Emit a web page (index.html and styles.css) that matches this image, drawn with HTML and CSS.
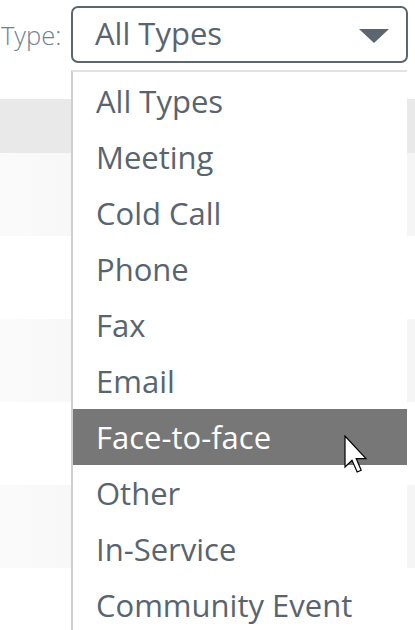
FILE: index.html
```html
<!DOCTYPE html>
<html>
<head>
    <link rel="stylesheet" href="styles.css">
</head>
<body>
    <div class="filter">
        <span class="label">Type:</span>
        <div class="select">
            <span class="value">All Types</span>
            <span class="caret"></span>
        </div>
    </div>

    <!-- table rows behind the open list -->
    <div class="table">
        <div class="row head"></div>
        <div class="row odd"></div>
        <div class="row"></div>
        <div class="row odd"></div>
        <div class="row"></div>
        <div class="row odd"></div>
        <div class="row"></div>
    </div>

    <ul class="options">
        <li>All Types</li>
        <li>Meeting</li>
        <li>Cold Call</li>
        <li>Phone</li>
        <li>Fax</li>
        <li>Email</li>
        <li class="hover">Face-to-face</li>
        <li>Other</li>
        <li>In-Service</li>
        <li>Community Event</li>
    </ul>

    <svg class="cursor" width="24" height="38" viewBox="0 0 12 19">
        <path d="M0.5 0.5 L0.5 16 L4 12.6 L6.6 18.5 L8.6 17.6 L6.1 11.8 L11 11.8 Z" fill="#fff" stroke="#000" stroke-width="0.6" stroke-linejoin="miter"/>
    </svg>
</body>
</html>
```

FILE: styles.css
```css
body {
    margin: 0;
    font-family: "Open Sans", sans-serif;
    background: #fff;
    color: #58646f;
    position: relative;
    height: 630px;
    overflow: hidden;
}

.filter {
    display: flex;
    align-items: center;
    padding: 6px 0 0 1px;
    height: 57px;
}

.label {
    width: 70px;
    font-size: 25.5px;
    font-weight: 300;
    color: #6f8291;
}

.select {
    box-sizing: border-box;
    width: 337px;
    height: 57px;
    border: 2px solid #5b6670;
    border-radius: 7px;
    display: flex;
    align-items: center;
    justify-content: space-between;
    padding: 0 17px 0 22px;
}

.value {
    font-size: 31px;
    color: #58646f;
    margin-top: -3px;
}

.caret {
    width: 0;
    height: 0;
    border-left: 15px solid transparent;
    border-right: 15px solid transparent;
    border-top: 14px solid #5b6670;
    margin-top: 2px;
}

/* Background table */
.table {
    margin-top: 36px;
}

.row {
    height: 83px;
    background: #fff;
}

.row.head {
    height: 54px;
    background: #e9e9e9;
}

.row.odd {
    background: linear-gradient(90deg, #fafafa 0, #f8f8f8 70px, #f5f5f5 72px);
}

/* Open dropdown list */
.options {
    position: absolute;
    top: 70px;
    left: 71px;
    width: 334px;
    height: 557px;
    margin: 0;
    padding: 1px 0 0 0;
    list-style: none;
    background: #fff;
    border-top: 2px solid #e2e2e2;
    border-left: 2px solid #cfcfcf;
    overflow: hidden;
}

.options li {
    height: 56px;
    line-height: 56px;
    padding-left: 23px;
    font-size: 31px;
    color: #58646f;
    white-space: nowrap;
}

.options li.hover {
    background: #777777;
    color: #fff;
}

.cursor {
    position: absolute;
    left: 344px;
    top: 435px;
}
```
